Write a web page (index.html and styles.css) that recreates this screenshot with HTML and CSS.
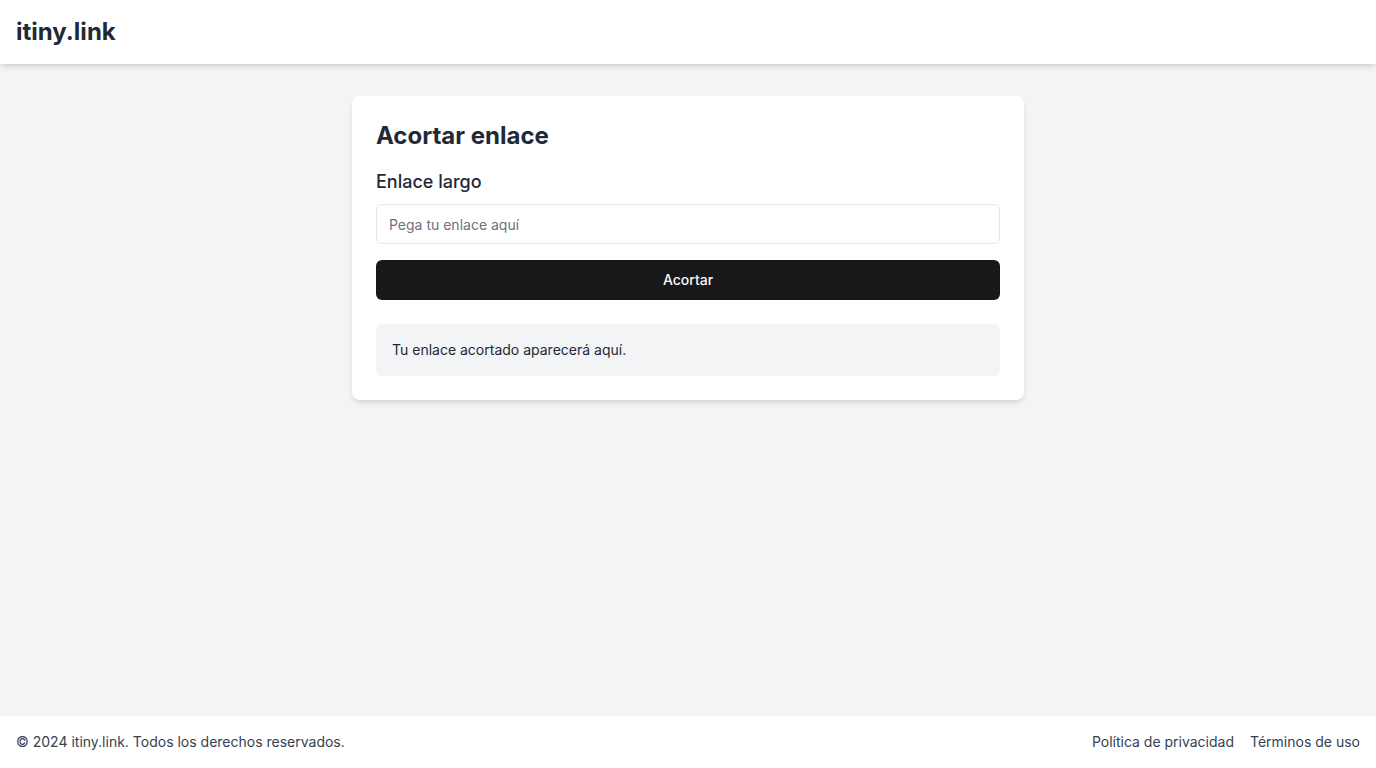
FILE: index.html
```html
<!DOCTYPE html>
<html lang="es">
<head>
<meta charset="utf-8">
<title>itiny.link</title>
<link rel="stylesheet" href="styles.css">
</head>
<body>
<header class="site-header">
  <a class="brand" href="#">itiny.link</a>
</header>
<main class="main">
  <section class="card">
    <h1 class="card-title">Acortar enlace</h1>
    <label class="field-label" for="url">Enlace largo</label>
    <input class="field-input" id="url" type="text" placeholder="Pega tu enlace aquí">
    <button class="btn" type="button">Acortar</button>
    <div class="result">Tu enlace acortado aparecerá aquí.</div>
  </section>
</main>
<footer class="site-footer">
  <p class="copy">© 2024 itiny.link. Todos los derechos reservados.</p>
  <nav class="footer-links">
    <a href="#">Política de privacidad</a>
    <a href="#">Términos de uso</a>
  </nav>
</footer>
</body>
</html>
```
FILE: styles.css
```css
* { box-sizing: border-box; }
html, body { margin: 0; padding: 0; }
body {
  font-family: Inter, "Noto Sans", sans-serif;
  background: #f3f4f6;
  color: #1f2937;
  min-height: 100vh;
  display: flex;
  flex-direction: column;
}
.site-header {
  background: #fff;
  height: 64px;
  padding: 0 16px;
  display: flex;
  align-items: center;
  box-shadow: 0 4px 6px -1px rgba(0,0,0,0.1), 0 2px 4px -2px rgba(0,0,0,0.1);
  position: relative;
  z-index: 1;
}
.brand {
  font-size: 24px;
  line-height: 32px;
  font-weight: 700;
  color: #1f2937;
  text-decoration: none;
}
.main {
  flex: 1;
  padding: 32px 16px;
  display: flex;
  flex-direction: column;
  align-items: center;
}
.card {
  width: 672px;
  background: #fff;
  border-radius: 8px;
  padding: 24px;
  box-shadow: 0 4px 6px -1px rgba(0,0,0,0.1), 0 2px 4px -2px rgba(0,0,0,0.1);
  display: flex;
  flex-direction: column;
}
.card-title {
  margin: 0 0 16px;
  font-size: 24px;
  line-height: 32px;
  font-weight: 700;
  color: #1f2937;
}
.field-label {
  font-size: 18px;
  line-height: 28px;
  font-weight: 500;
  color: #1f2937;
  margin-bottom: 8px;
}
.field-input {
  height: 40px;
  border: 1px solid #e5e7eb;
  border-radius: 6px;
  padding: 0 12px;
  font-family: inherit;
  font-size: 14px;
  color: #1f2937;
  background: #fff;
  outline: none;
}
.field-input::placeholder { color: #6b7280; }
.btn {
  margin-top: 16px;
  height: 40px;
  border: none;
  border-radius: 6px;
  background: #18181b;
  color: #fafafa;
  font-family: inherit;
  font-size: 14px;
  line-height: 20px;
  font-weight: 500;
  padding: 0 16px 1px;
  cursor: pointer;
}
.result {
  margin-top: 24px;
  background: #f3f4f6;
  border-radius: 6px;
  padding: 16px;
  font-size: 14px;
  line-height: 20px;
  color: #1f2937;
}
.site-footer {
  background: #fff;
  padding: 16px;
  display: flex;
  justify-content: space-between;
  align-items: center;
  font-size: 14px;
  line-height: 20px;
  color: #374151;
}
.copy { margin: 0; }
.footer-links { display: flex; gap: 16px; }
.footer-links a { color: #374151; text-decoration: none; }
```
